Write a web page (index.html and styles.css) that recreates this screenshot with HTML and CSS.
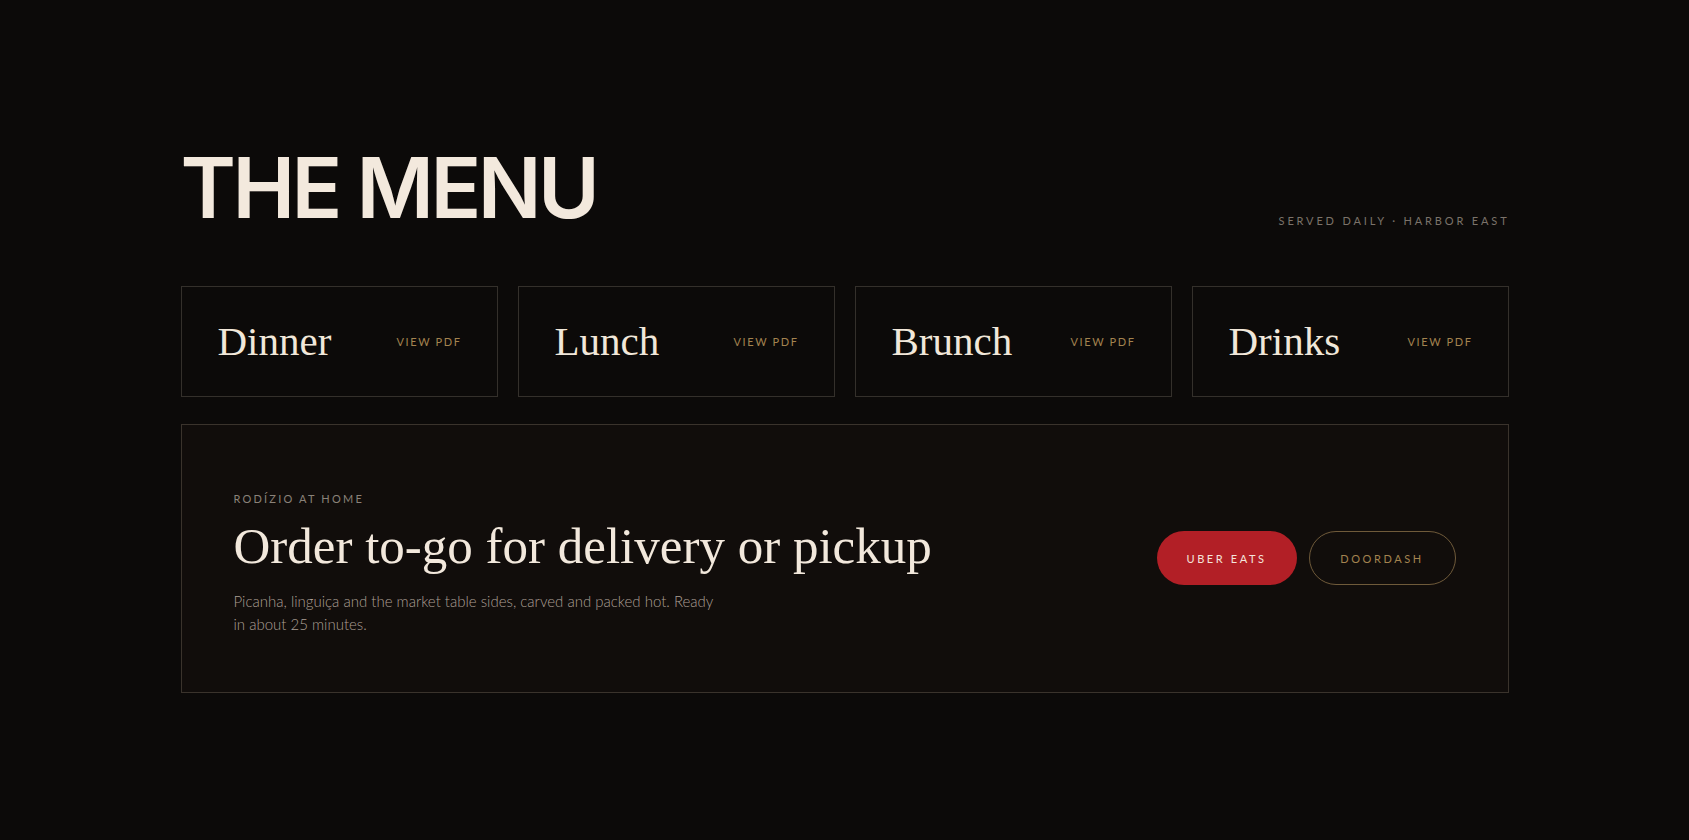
FILE: index.html
```html
<!DOCTYPE html>
<html lang="en">
<head>
<meta charset="utf-8">
<title>The Menu</title>
<link rel="stylesheet" href="styles.css">
</head>
<body>
<main class="menu">
  <header class="menu-head">
    <h1 class="menu-title">THE MENU</h1>
    <p class="menu-sub">SERVED DAILY · HARBOR EAST</p>
  </header>

  <section class="cards">
    <a class="card" href="#"><span class="card-name">Dinner</span><span class="card-link">VIEW PDF</span></a>
    <a class="card" href="#"><span class="card-name">Lunch</span><span class="card-link">VIEW PDF</span></a>
    <a class="card" href="#"><span class="card-name">Brunch</span><span class="card-link">VIEW PDF</span></a>
    <a class="card" href="#"><span class="card-name">Drinks</span><span class="card-link">VIEW PDF</span></a>
  </section>

  <section class="order">
    <div class="order-text">
      <p class="order-label">RODÍZIO AT HOME</p>
      <h2 class="order-title">Order to-go for delivery or pickup</h2>
      <p class="order-desc">Picanha, linguiça and the market table sides, carved and packed hot. Ready in about 25 minutes.</p>
    </div>
    <div class="order-actions">
      <a class="btn btn-red" href="#">UBER EATS</a>
      <a class="btn btn-outline" href="#">DOORDASH</a>
    </div>
  </section>
</main>
</body>
</html>
```

FILE: styles.css
```css
* { box-sizing: border-box; }

html, body {
  margin: 0;
  padding: 0;
  background: #0c0a09;
}

body {
  font-family: "Lato", "Liberation Sans", sans-serif;
  color: #f2e8dc;
}

.menu {
  width: 1328px;
  margin: 0 auto;
  padding-top: 146px;
}

.menu-head {
  display: flex;
  justify-content: space-between;
  align-items: flex-end;
}

.menu-title {
  margin: 0;
  font-family: "Inter", "Liberation Sans", sans-serif;
  font-weight: 600;
  font-size: 84px;
  line-height: 1;
  letter-spacing: -0.042em;
  color: #f3e9dd;
}

.menu-sub {
  margin: 0 -1px 1px 0;
  font-size: 11px;
  line-height: 16px;
  letter-spacing: 2.85px;
  color: #7b736a;
}

.cards {
  margin-top: 56px;
  display: grid;
  grid-template-columns: repeat(4, 1fr);
  gap: 20px;
}

.card {
  display: flex;
  align-items: center;
  justify-content: space-between;
  height: 111px;
  padding: 0 35px 0 36px;
  border: 1px solid #34302b;
  text-decoration: none;
  background: #0c0a09;
}

.card-name {
  font-family: "Liberation Serif", "DejaVu Serif", serif;
  font-size: 41px;
  line-height: 1.2;
  color: #f1e7d9;
}

.card-link {
  font-size: 11px;
  letter-spacing: 1.6px;
  color: #a3834f;
}

.order {
  margin-top: 27px;
  display: flex;
  align-items: center;
  justify-content: space-between;
  padding: 66px 52px 55px;
  background: #110d0b;
  border: 1px solid #3a332c;
}

.order-label {
  margin: 0;
  font-size: 11px;
  line-height: 16px;
  letter-spacing: 2.2px;
  color: #8a8279;
}

.order-title {
  margin: 11px 0 0;
  font-family: "Liberation Serif", "DejaVu Serif", serif;
  font-weight: 400;
  font-size: 51px;
  line-height: 1.1;
  color: #f2e8dc;
}

.order-desc {
  margin: 16px 0 0;
  max-width: 480px;
  font-size: 15px;
  font-weight: 300;
  line-height: 23.25px;
  color: #ab9f94;
}

.order-actions {
  display: flex;
  gap: 12px;
  margin-bottom: 11px;
}

.btn {
  display: flex;
  align-items: center;
  justify-content: center;
  height: 54px;
  border-radius: 27px;
  font-size: 11px;
  letter-spacing: 2.6px;
  text-decoration: none;
}

.btn-red {
  width: 140px;
  background: #b21f26;
  color: #f4e4dc;
}

.btn-outline {
  width: 147px;
  border: 1px solid #6f5a3a;
  color: #a3834f;
}
```
